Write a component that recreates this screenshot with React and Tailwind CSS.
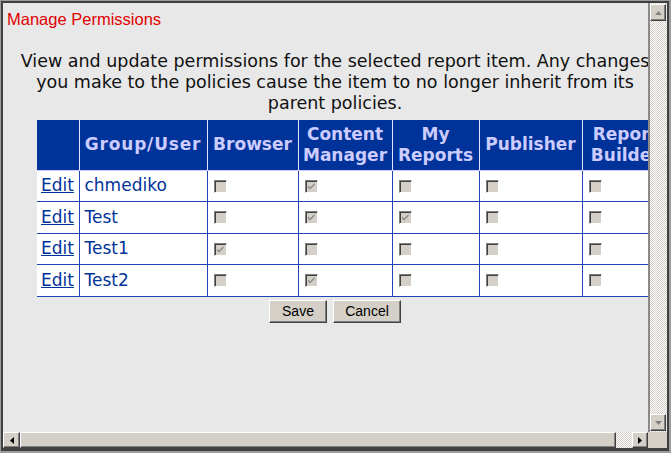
import React from 'react';

const rows = [
    { name: 'chmediko', perms: [false, true, false, false, false] },
    { name: 'Test', perms: [false, true, true, false, false] },
    { name: 'Test1', perms: [true, false, false, false, false] },
    { name: 'Test2', perms: [false, true, false, false, false] },
];

const Box = ({ checked }) => (
    <span className="inline-block w-[13px] h-[13px] bg-[#d4d0c8] border border-t-[#808080] border-l-[#808080] border-r-white border-b-white shadow-[inset_1px_1px_#404040] align-middle">
        {checked && (
            <svg width="11" height="11" viewBox="0 0 11 11" className="block">
                <path d="M2 4.5 L4 6.5 L8.5 2 L8.5 4 L4 8.5 L2 6.5 Z" fill="#8a8a8a" />
            </svg>
        )}
    </span>
);

const Arrow = ({ dir, color }) => {
    const pts = {
        up: '0,4 3.5,0 7,4',
        down: '0,0 7,0 3.5,4',
        left: '4,0 4,7 0,3.5',
        right: '0,0 0,7 4,3.5',
    }[dir];
    const vertical = dir === 'up' || dir === 'down';
    return (
        <svg width={vertical ? 7 : 4} height={vertical ? 4 : 7} viewBox={vertical ? '0 0 7 4' : '0 0 4 7'}>
            <polygon points={pts} fill={color} />
        </svg>
    );
};

const ScrollButton = ({ children, className = '' }) => (
    <div className={`flex items-center justify-center bg-[#d4d0c8] border border-t-white border-l-white border-r-[#404040] border-b-[#404040] shadow-[inset_-1px_-1px_#808080] ${className}`}>
        {children}
    </div>
);

const checker = 'bg-[repeating-conic-gradient(#d4d0c8_0%_25%,#ffffff_0%_50%)] bg-[length:2px_2px]';

const App = () => {
    return (
        <div className="w-[671px] h-[453px] border-t border-l border-r-2 border-b-2 border-[#9c9c9c] bg-[#e8e8e8]">
            <div className="h-full flex flex-col border-t-2 border-l-2 border-r-2 border-b-[3px] border-[#404040]">

                {/* viewport + vertical scrollbar */}
                <div className="flex flex-1 min-h-0">
                    <div className="flex-1 overflow-hidden bg-[#e8e8e8]">
                        <div className="w-[664px]">
                            <div className="pl-[4px] pt-[7px] text-[16.5px] leading-[18px] text-[#e00000] font-['Liberation_Sans',Arial,sans-serif]">
                                Manage Permissions
                            </div>

                            <p className="mt-[23px] text-center text-[17.5px] leading-[21px] text-[#111] whitespace-nowrap font-['DejaVu_Sans',Verdana,sans-serif]">
                                View and update permissions for the selected report item. Any changes<br />
                                you make to the policies cause the item to no longer inherit from its<br />
                                parent policies.
                            </p>

                            <table className="ml-[34px] mt-[6px] table-fixed border-collapse w-[631px] font-['DejaVu_Sans',Verdana,sans-serif] text-[17px]">
                                <colgroup>
                                    <col className="w-[42px]" />
                                    <col className="w-[128px]" />
                                    <col className="w-[91px]" />
                                    <col className="w-[94px]" />
                                    <col className="w-[87px]" />
                                    <col className="w-[103px]" />
                                    <col className="w-[86px]" />
                                </colgroup>
                                <thead>
                                    <tr className="h-[50px] bg-[#003399] text-[#ccccff] font-bold leading-[21px]">
                                        <th className="border-b border-b-[#ccccff]"></th>
                                        <th className="px-[4px] border-l border-l-[#e0e4ff] border-b border-b-[#ccccff] text-center whitespace-nowrap tracking-[0.8px]">Group/User</th>
                                        <th className="px-[3px] border-l border-l-[#e0e4ff] border-b border-b-[#ccccff] text-center">Browser</th>
                                        <th className="px-[3px] border-l border-l-[#e0e4ff] border-b border-b-[#ccccff] text-center">Content<br />Manager</th>
                                        <th className="px-[3px] border-l border-l-[#e0e4ff] border-b border-b-[#ccccff] text-center">My<br />Reports</th>
                                        <th className="px-[3px] border-l border-l-[#e0e4ff] border-b border-b-[#ccccff] text-center">Publisher</th>
                                        <th className="px-[3px] border-l border-l-[#e0e4ff] border-b border-b-[#ccccff] text-center whitespace-nowrap">Report<br />Builder</th>
                                    </tr>
                                </thead>
                                <tbody className="bg-white text-[#003399]">
                                    {rows.map((row) => (
                                        <tr key={row.name} className="h-[31.5px]">
                                            <td className="px-[4px] border-b border-b-[#2244b8]">
                                                <a href="#" className="underline">Edit</a>
                                            </td>
                                            <td className="px-[5px] border-l border-l-[#2244b8] border-b border-b-[#2244b8]">{row.name}</td>
                                            {row.perms.map((p, i) => (
                                                <td key={i} className="pl-[6px] border-l border-l-[#2244b8] border-b border-b-[#2244b8]">
                                                    <Box checked={p} />
                                                </td>
                                            ))}
                                        </tr>
                                    ))}
                                </tbody>
                            </table>

                            <div className="flex justify-center gap-[6px] mt-[3px] font-['Liberation_Sans',Arial,sans-serif] text-[14px]">
                                <button className="h-[23px] w-[58px] bg-[#d4d0c8] text-black border border-t-white border-l-white border-r-[#404040] border-b-[#404040] shadow-[inset_-1px_-1px_#808080]">Save</button>
                                <button className="h-[23px] w-[68px] bg-[#d4d0c8] text-black border border-t-white border-l-white border-r-[#404040] border-b-[#404040] shadow-[inset_-1px_-1px_#808080]">Cancel</button>
                            </div>
                        </div>
                    </div>

                    <div className={`w-[19px] flex flex-col justify-between border-l-2 border-l-[#8a8a8a] pt-[1px] pr-[1px] pb-[1px] ${checker}`}>
                        <ScrollButton className="h-[17px] w-[16px]"><Arrow dir="up" color="#808080" /></ScrollButton>
                        <ScrollButton className="h-[17px] w-[16px]"><Arrow dir="down" color="#808080" /></ScrollButton>
                    </div>
                </div>

                {/* horizontal scrollbar */}
                <div className="flex h-[16px]">
                    <div className={`flex flex-1 ${checker}`}>
                        <ScrollButton className="w-[17px] h-[16px]"><Arrow dir="left" color="#000" /></ScrollButton>
                        <div className="w-[596px] h-[16px] bg-[#d4d0c8] border border-t-white border-l-white border-r-[#404040] border-b-[#404040] shadow-[inset_-1px_-1px_#808080]"></div>
                        <div className="flex-1"></div>
                        <ScrollButton className="w-[16px] h-[16px]"><Arrow dir="right" color="#000" /></ScrollButton>
                    </div>
                    <div className="w-[19px] bg-[#d4d0c8]"></div>
                </div>

            </div>
        </div>
    );
};

export default App;
